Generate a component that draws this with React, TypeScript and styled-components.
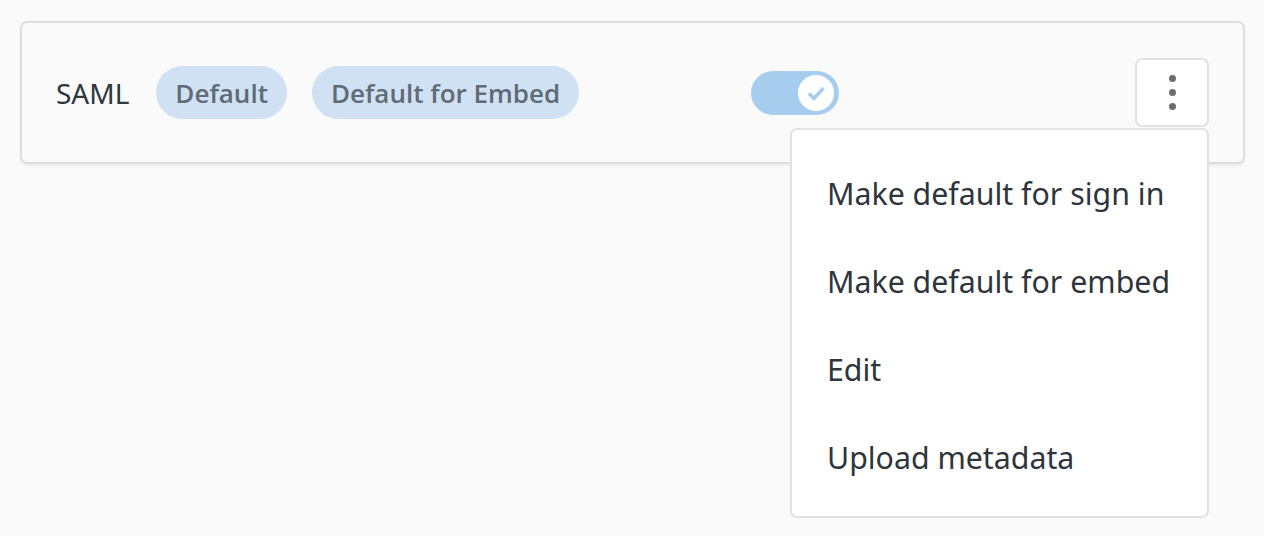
import React from 'react';
import styled, { createGlobalStyle } from 'styled-components';

const GlobalStyle = createGlobalStyle`
  html, body {
    margin: 0;
    padding: 0;
    background: #fafafa;
    font-family: "Noto Sans", "Open Sans", sans-serif;
    color: #2e353b;
  }
`;

const Page = styled.div`
  padding: 21px 19px 21px 20px;
  height: 536px;
  box-sizing: border-box;
`;

const Card = styled.div`
  display: flex;
  align-items: center;
  height: 143px;
  box-sizing: border-box;
  padding: 0 34px 0 34px;
  border: 2px solid #dedede;
  border-radius: 7px;
  background: #fafafa;
  box-shadow: 0 2px 3px rgba(0, 0, 0, 0.06);
`;

const Info = styled.div`
  display: flex;
  align-items: center;
  gap: 25px;
  flex: 0 0 695px;
`;

const Name = styled.span`
  font-size: 28px;
  color: #2e353b;
  margin-right: 2px;
`;

const Badge = styled.span`
  display: inline-flex;
  align-items: center;
  height: 53px;
  padding: 0 19px;
  border-radius: 27px;
  background: #cfe1f2;
  color: #5f6b76;
  font-family: "Open Sans", "Noto Sans", sans-serif;
  font-size: 26px;
  font-weight: 600;
`;

const Toggle = styled.div<{ $on: boolean }>`
  display: flex;
  align-items: center;
  justify-content: ${(p) => (p.$on ? 'flex-end' : 'flex-start')};
  width: 88px;
  height: 44px;
  box-sizing: border-box;
  padding: 0 5px;
  border-radius: 22px;
  background: #a7cdee;
`;

const Knob = styled.div`
  display: flex;
  align-items: center;
  justify-content: center;
  width: 36px;
  height: 36px;
  border-radius: 50%;
  background: #fff;
`;

const Spacer = styled.div`
  flex: 1;
`;

const MenuAnchor = styled.div`
  position: relative;
`;

const KebabButton = styled.button`
  display: flex;
  flex-direction: column;
  align-items: center;
  justify-content: center;
  gap: 7px;
  width: 74px;
  height: 69px;
  padding: 0;
  border: 2px solid #e2e2e2;
  border-radius: 7px;
  background: #fff;
`;

const Dot = styled.span`
  width: 7px;
  height: 7px;
  border-radius: 50%;
  background: #6a6e74;
`;

const Menu = styled.ul`
  position: absolute;
  top: 70px;
  right: 0;
  width: 419px;
  height: 390px;
  box-sizing: border-box;
  margin: 0;
  padding: 19px 0;
  list-style: none;
  background: #fff;
  border: 2px solid #e2e2e2;
  border-radius: 7px;
  z-index: 2;
`;

const MenuItem = styled.li`
  display: flex;
  align-items: center;
  height: 88px;
  padding: 0 35px;
  font-size: 30.3px;
  color: #2e353b;
  white-space: nowrap;
`;

const menuItems = [
  'Make default for sign in',
  'Make default for embed',
  'Edit',
  'Upload metadata',
];

export default function App() {
  return (
    <>
      <GlobalStyle />
      <Page>
        <Card>
          <Info>
            <Name>SAML</Name>
            <Badge>Default</Badge>
            <Badge>Default for Embed</Badge>
          </Info>
          <Toggle $on>
            <Knob>
              <svg width="22" height="22" viewBox="0 0 22 22" fill="none">
                <path d="M4 11.5l5 5L18.5 6" stroke="#a7cdee" strokeWidth="3.6" />
              </svg>
            </Knob>
          </Toggle>
          <Spacer />
          <MenuAnchor>
            <KebabButton>
              <Dot />
              <Dot />
              <Dot />
            </KebabButton>
            <Menu>
              {menuItems.map((item) => (
                <MenuItem key={item}>{item}</MenuItem>
              ))}
            </Menu>
          </MenuAnchor>
        </Card>
      </Page>
    </>
  );
}
